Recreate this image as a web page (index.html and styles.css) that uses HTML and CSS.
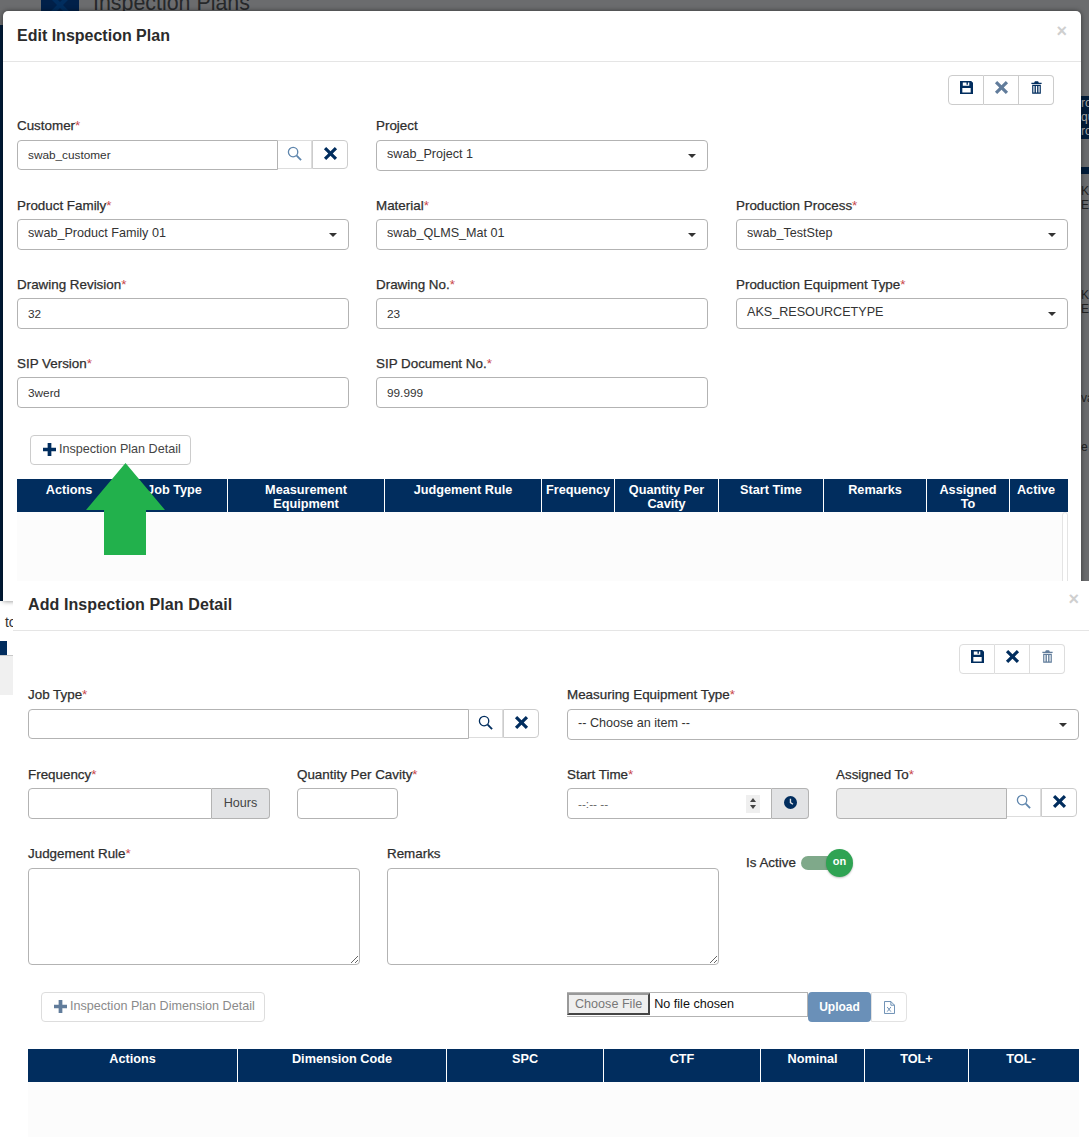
FILE: index.html
```html
<!DOCTYPE html>
<html>
<head>
    <title>Inspection Plans</title>
    <link rel="stylesheet" href="styles.css">
</head>
<body>
    <svg width="0" height="0" class="icon-defs">
        <symbol id="i-times" viewBox="0 0 16 16"><path d="M3.4 1 8 5.6 12.600 1 15 3.400 10.400 8 15 12.600 12.600 15 8 10.400 3.400 15 1 12.600 5.600 8 1 3.400z"/></symbol>
        <symbol id="i-save" viewBox="0 0 14 14"><path fill-rule="evenodd" d="M0 0h12l2 2v12H0zM3 1.500v3.500h7V1.500h-1.500v2.500h-1.500V1.500zM2.500 7.500v5h9v-5z"/></symbol>
        <symbol id="i-trash" viewBox="0 0 14 16"><path fill-rule="evenodd" d="M5 0h4l1 2h3.500v1.500H.5V2H4zM1.500 4.500h11V16h-11zM3 6v8.500h1.500V6zM6.200 6v8.500h1.600V6zM9.500 6v8.500H11V6z"/></symbol>
        <symbol id="i-search" viewBox="0 0 16 16"><circle cx="6.500" cy="6.500" r="5" fill="none" stroke="currentColor" stroke-width="1.400"/><path d="M10.300 10.300 15 15" stroke="currentColor" stroke-width="2" fill="none"/></symbol>
        <symbol id="i-plus" viewBox="0 0 14 14"><path d="M5 0h4v5h5v4H9v5H5V9H0V5h5z"/></symbol>
        <symbol id="i-clock" viewBox="0 0 14 14"><path fill-rule="evenodd" d="M7 0a7 7 0 1 1 0 14A7 7 0 0 1 7 0zM6.200 3v4.500l3 2 .9-1.200-2.400-1.600V3z"/></symbol>
        <symbol id="i-xls" viewBox="0 0 12 14"><path fill="none" stroke="currentColor" d="M.5.5h7l4 4v9H.5zM7.500.5v4h4"/><path fill="none" stroke="currentColor" d="M3.500 6.500l4 5M7.500 6.500l-4 5"/></symbol>
    </svg>

    <div class="backdrop">
        <div class="bg-logo"><svg class="icon bg-logo-x"><use href="#i-times"/></svg></div>
        <div class="bg-title">Inspection Plans</div>
        <div class="bg-side bg-side-head">ro<br>qu<br>ro</div>
        <div class="bg-side bg-side-bar"></div>
        <div class="bg-side bg-side-a">KS<br>ET</div>
        <div class="bg-side bg-side-b">KS<br>ET</div>
        <div class="bg-side bg-side-c">va</div>
        <div class="bg-side bg-side-d">e</div>
    </div>
    <div class="left-scrap">
        <div class="scrap-text">&nbsp;to</div>
        <div class="scrap-bar"></div>
    </div>

    <div class="modal modal-edit">
        <div class="modal-head">
            <h4>Edit Inspection Plan</h4>
            <span class="close">&times;</span>
        </div>
        <div class="modal-body">
            <div class="toolbar toolbar-edit">
                <button class="tool"><svg class="icon save"><use href="#i-save"/></svg></button>
                <button class="tool"><svg class="icon times faded"><use href="#i-times"/></svg></button>
                <button class="tool"><svg class="icon trash"><use href="#i-trash"/></svg></button>
            </div>
            <div class="edit-grid">
                <div class="field">
                    <label>Customer<em>*</em></label>
                    <div class="input-group">
                        <input type="text" value="swab_customer">
                        <button class="addon"><svg class="icon search"><use href="#i-search"/></svg></button>
                        <button class="addon last"><svg class="icon times"><use href="#i-times"/></svg></button>
                    </div>
                </div>
                <div class="field">
                    <label>Project</label>
                    <div class="select"><span>swab_Project 1</span><i class="caret"></i></div>
                </div>
                <div class="field"></div>

                <div class="field">
                    <label>Product Family<em>*</em></label>
                    <div class="select"><span>swab_Product Family 01</span><i class="caret"></i></div>
                </div>
                <div class="field">
                    <label>Material<em>*</em></label>
                    <div class="select"><span>swab_QLMS_Mat 01</span><i class="caret"></i></div>
                </div>
                <div class="field">
                    <label>Production Process<em>*</em></label>
                    <div class="select"><span>swab_TestStep</span><i class="caret"></i></div>
                </div>

                <div class="field">
                    <label>Drawing Revision<em>*</em></label>
                    <input type="text" value="32">
                </div>
                <div class="field">
                    <label>Drawing No.<em>*</em></label>
                    <input type="text" value="23">
                </div>
                <div class="field">
                    <label>Production Equipment Type<em>*</em></label>
                    <div class="select"><span>AKS_RESOURCETYPE</span><i class="caret"></i></div>
                </div>

                <div class="field">
                    <label>SIP Version<em>*</em></label>
                    <input type="text" value="3werd">
                </div>
                <div class="field">
                    <label>SIP Document No.<em>*</em></label>
                    <input type="text" value="99.999">
                </div>
            </div>
            <button class="add-btn add-detail"><svg class="icon plus"><use href="#i-plus"/></svg>Inspection Plan Detail</button>
            <div class="grid-head head-edit">
                <div>Actions</div>
                <div>Job Type</div>
                <div class="wrap">Measurement Equipment</div>
                <div>Judgement Rule</div>
                <div>Frequency</div>
                <div>Quantity Per Cavity</div>
                <div>Start Time</div>
                <div>Remarks</div>
                <div>Assigned To</div>
                <div>Active</div>
            </div>
            <div class="grid-body body-edit"><div class="scroll-track"></div></div>
        </div>
    </div>

    <svg class="arrow" width="79" height="92" viewBox="0 0 79 92">
        <path d="M39.500 0 79 47H60V92H18V47H0z" fill="#22b14c"/>
    </svg>

    <div class="modal modal-add">
        <div class="modal-head">
            <h4>Add Inspection Plan Detail</h4>
            <span class="close">&times;</span>
        </div>
        <div class="modal-body">
            <div class="toolbar toolbar-add">
                <button class="tool"><svg class="icon save"><use href="#i-save"/></svg></button>
                <button class="tool"><svg class="icon times"><use href="#i-times"/></svg></button>
                <button class="tool"><svg class="icon trash faded"><use href="#i-trash"/></svg></button>
            </div>

            <div class="row row-two">
                <div class="field">
                    <label>Job Type<em>*</em></label>
                    <div class="input-group job">
                        <input type="text">
                        <button class="addon"><svg class="icon search strong"><use href="#i-search"/></svg></button>
                        <button class="addon last"><svg class="icon times"><use href="#i-times"/></svg></button>
                    </div>
                </div>
                <div class="field">
                    <label>Measuring Equipment Type<em>*</em></label>
                    <div class="select"><span>-- Choose an item --</span><i class="caret"></i></div>
                </div>
            </div>

            <div class="row row-four">
                <div class="field">
                    <label>Frequency<em>*</em></label>
                    <div class="input-group freq">
                        <input type="text">
                        <span class="suffix">Hours</span>
                    </div>
                </div>
                <div class="field">
                    <label>Quantity Per Cavity<em>*</em></label>
                    <input type="text" class="qty">
                </div>
                <div class="field">
                    <label>Start Time<em>*</em></label>
                    <div class="input-group time">
                        <div class="time-box">
                            <span>--:-- --</span>
                            <span class="spinner"><i class="up"></i><i class="down"></i></span>
                        </div>
                        <span class="suffix"><svg class="icon clock"><use href="#i-clock"/></svg></span>
                    </div>
                </div>
                <div class="field">
                    <label>Assigned To<em>*</em></label>
                    <div class="input-group assigned">
                        <input type="text" disabled>
                        <button class="addon"><svg class="icon search"><use href="#i-search"/></svg></button>
                        <button class="addon last"><svg class="icon times"><use href="#i-times"/></svg></button>
                    </div>
                </div>
            </div>

            <div class="row row-three">
                <div class="field">
                    <label>Judgement Rule<em>*</em></label>
                    <textarea></textarea>
                </div>
                <div class="field">
                    <label>Remarks</label>
                    <textarea></textarea>
                </div>
                <div class="active-field">
                    <label>Is Active</label>
                    <div class="toggle"><span class="knob">on</span></div>
                </div>
            </div>

            <div class="row row-actions">
                <button class="add-btn add-dimension"><svg class="icon plus faded"><use href="#i-plus"/></svg>Inspection Plan Dimension Detail</button>
                <div class="upload">
                    <input type="file" class="file">
                    <button class="upload-btn">Upload</button>
                    <button class="xls-btn"><svg class="icon xls"><use href="#i-xls"/></svg></button>
                </div>
            </div>

            <div class="grid-head head-add">
                <div>Actions</div>
                <div>Dimension Code</div>
                <div>SPC</div>
                <div>CTF</div>
                <div>Nominal</div>
                <div>TOL+</div>
                <div>TOL-</div>
            </div>
            <div class="grid-body body-add"></div>
        </div>
    </div>
</body>
</html>
```

FILE: styles.css
```css
* {
    box-sizing: border-box;
}

html, body {
    margin: 0;
    height: 1137px;
    overflow: hidden;
}

body {
    position: relative;
    width: 1089px;
    background-color: #fff;
    font-family: "Liberation Sans", Arial, sans-serif;
    font-size: 12px;
    color: #333;
}

.icon-defs {
    position: absolute;
}

/* page behind the dialogs */
.backdrop {
    position: absolute;
    left: 0;
    top: 0;
    width: 1089px;
    height: 601px;
    background-color: #6b6c6e;
    overflow: hidden;
}

.backdrop::before {
    content: "";
    position: absolute;
    left: 0;
    top: 25px;
    width: 3px;
    height: 576px;
    background-color: #011b38;
}

.bg-logo {
    position: absolute;
    left: 41px;
    top: -14px;
    width: 38px;
    height: 38px;
    background-color: #012049;
    display: flex;
    align-items: center;
    justify-content: center;
}

.bg-logo-x {
    width: 20px;
    height: 20px;
    fill: #6b6c6e;
}

.bg-title {
    position: absolute;
    left: 93px;
    top: -9px;
    font-size: 21.4px;
    color: #26282a;
}

.bg-side {
    position: absolute;
    left: 1081px;
    width: 8px;
    overflow: hidden;
    font-size: 12px;
    line-height: 14px;
    color: #222;
}

.bg-side-head {
    top: 96px;
    height: 43px;
    background-color: #011b38;
    color: #aaa;
}

.bg-side-bar {
    top: 167px;
    height: 7px;
    background-color: #011b38;
}

.bg-side-a {
    top: 184px;
    height: 32px;
}

.bg-side-b {
    top: 288px;
    height: 32px;
}

.bg-side-c {
    top: 391px;
    height: 16px;
}

.bg-side-d {
    top: 440px;
    height: 16px;
}

.left-scrap {
    position: absolute;
    left: 0;
    top: 601px;
    width: 13px;
    height: 94px;
    background: linear-gradient(#fff 54px, #c8c8c8 54px, #c8c8c8 55px, #f0f0f0 55px);
    overflow: hidden;
}

.scrap-text {
    font-size: 14px;
    line-height: 16px;
    margin: 13px 0 0 1px;
    white-space: nowrap;
}

.scrap-bar {
    width: 7px;
    height: 14px;
    margin-top: 11px;
    background-color: #012d5e;
}

/* dialogs */
.modal {
    position: absolute;
    background-color: #fff;
    border-radius: 5px;
    overflow: hidden;
}

.modal-edit {
    left: 3px;
    top: 11px;
    width: 1078px;
    height: 590px;
    border-radius: 5px 5px 0 0;
    box-shadow: 0 0 5px rgba(0, 0, 0, 0.5);
}

.modal-add {
    left: 13px;
    top: 581px;
    width: 1076px;
    height: 556px;
    border-radius: 0;
}

.modal-head {
    display: flex;
    align-items: center;
    justify-content: space-between;
    border-bottom: 1px solid #e5e5e5;
}

.modal-edit .modal-head {
    height: 51px;
    padding: 0 14px;
}

.modal-add .modal-head {
    height: 50px;
    padding: 0 10px 2px 15px;
}

h4 {
    margin: 0;
    font-size: 16px;
    font-weight: bold;
    color: #2b2b2b;
}

.modal-add h4 {
    letter-spacing: 0.1px;
}

.close {
    font-size: 18px;
    font-weight: bold;
    color: #cfcfcf;
    margin-top: -10px;
}

.modal-edit .modal-body {
    padding: 13px 13px 0 14px;
}

.modal-add .modal-body {
    padding: 13px 10px 0 15px;
}

/* toolbars */
.toolbar {
    display: flex;
    justify-content: flex-end;
    height: 30px;
    margin-bottom: 10px;
    margin-right: 14px;
}

.tool {
    width: 35px;
    height: 30px;
    padding: 0 0 5px;
    background-color: #fff;
    border: 1px solid #ccc;
    border-left-width: 0;
    display: flex;
    align-items: center;
    justify-content: center;
}

.tool:first-child {
    width: 36px;
    border-left-width: 1px;
    border-radius: 4px 0 0 4px;
}

.tool:last-child {
    border-radius: 0 4px 4px 0;
}

.toolbar-add .tool {
    border-color: #ddd;
}

.icon {
    display: block;
    fill: #012d5e;
    color: #012d5e;
}

.save {
    width: 13px;
    height: 13px;
}

.times {
    width: 15px;
    height: 15px;
}

.trash {
    width: 11px;
    height: 13px;
}

.faded {
    opacity: 0.62;
}

.search {
    width: 15px;
    height: 15px;
    color: #5f86ad;
}

.search.strong {
    color: #012d5e;
}

.plus {
    width: 13px;
    height: 13px;
    margin-right: 3px;
}

.clock {
    width: 13px;
    height: 13px;
}

.xls {
    width: 11px;
    height: 13px;
    color: #5f86ad;
}

/* form fields */
.edit-grid {
    display: grid;
    grid-template-columns: 359px 360px 332px;
    row-gap: 23px;
}

.edit-grid .field {
    width: 332px;
}

.edit-grid .input-group {
    width: 331px;
}

.edit-grid .field:nth-child(n+4) label {
    margin-top: 1px;
    margin-bottom: 4px;
}

label {
    display: block;
    height: 20px;
    margin-bottom: 5px;
    font-size: 13.4px;
    line-height: 22px;
    color: #2e2e2e;
    -webkit-text-stroke: 0.25px #2e2e2e;
    white-space: nowrap;
}

label em {
    font-style: normal;
    color: #c8474a;
    -webkit-text-stroke: 0;
}

input[type="text"], .select, textarea, .time-box {
    display: block;
    width: 100%;
    height: 31px;
    padding: 0 10px;
    font-family: "Liberation Sans", Arial, sans-serif;
    font-size: 11.8px;
    color: #333;
    background-color: #fff;
    border: 1px solid #b3b3b3;
    border-radius: 4px;
    outline: none;
}

.select {
    display: flex;
    align-items: center;
    justify-content: space-between;
    padding-bottom: 3px;
    font-size: 12.6px;
}

.caret {
    width: 0;
    height: 0;
    margin: 4px 1px 0 0;
    border-left: 4px solid transparent;
    border-right: 4px solid transparent;
    border-top: 4px solid #333;
}

.input-group {
    display: flex;
}

.input-group input[type="text"] {
    flex: 1;
    min-width: 0;
    height: 30px;
    border-radius: 4px 0 0 4px;
}

.addon {
    width: 34px;
    height: 29px;
    padding: 0;
    background-color: #fff;
    border: 1px solid #ddd;
    border-left-width: 0;
    display: flex;
    align-items: center;
    justify-content: center;
}

.addon.last {
    width: 36px;
    border-color: #ccc;
    border-left-width: 1px;
    border-radius: 0 4px 4px 0;
}

.addon svg {
    margin-bottom: 3px;
}

.suffix {
    display: flex;
    align-items: center;
    justify-content: center;
    height: 31px;
    padding-bottom: 2px;
    font-size: 12.6px;
    color: #444;
    background-color: #e2e3e5;
    border: 1px solid #b3b3b3;
    border-left-width: 0;
    border-radius: 0 4px 4px 0;
}

.job {
    width: 511px;
}

.freq {
    width: 242px;
}

.freq input[type="text"] {
    height: 31px;
}

.freq .suffix {
    width: 58px;
}

.qty {
    width: 101px !important;
}

.time {
    width: 242px;
}

.time-box {
    flex: 1;
    display: flex;
    align-items: center;
    justify-content: space-between;
    padding-right: 11px;
    color: #666;
    border-radius: 4px 0 0 4px;
}

.time .suffix {
    width: 37px;
}

.spinner {
    width: 14px;
    height: 18px;
    background-color: #efefef;
    display: flex;
    flex-direction: column;
    align-items: center;
    justify-content: center;
    gap: 3px;
}

.spinner i {
    width: 0;
    height: 0;
    border-left: 3px solid transparent;
    border-right: 3px solid transparent;
}

.spinner .up {
    border-bottom: 4px solid #444;
}

.spinner .down {
    border-top: 4px solid #444;
}

.assigned {
    width: 241px;
}

.assigned input[type="text"] {
    height: 31px;
    background-color: #ececec;
}

textarea {
    height: 97px;
    padding: 6px 11px;
}

.row {
    display: grid;
}

.row-two {
    grid-template-columns: 539px 512px;
    margin-bottom: 23px;
}

.row-four {
    grid-template-columns: 269px 270px 269px 241px;
    margin-bottom: 24px;
}

.row-four label {
    margin-top: 1px;
    margin-bottom: 4px;
}

.row-three {
    grid-template-columns: 359px 359px 300px;
    margin-bottom: 27px;
}

.row-three textarea {
    width: 332px;
}

.active-field {
    display: flex;
    align-items: flex-start;
    padding-top: 9px;
}

.active-field label {
    margin: 0;
    height: 20px;
    width: 55px;
}

.toggle {
    position: relative;
    width: 38px;
    height: 14px;
    margin: 4px 0 0 0;
    background-color: #7fa98a;
    border-radius: 7px;
}

.knob {
    position: absolute;
    right: -14px;
    top: -7px;
    width: 27px;
    height: 28px;
    border-radius: 50%;
    background-color: #2fa353;
    box-shadow: 0 1px 2px rgba(0, 0, 0, 0.25);
    color: #fff;
    font-size: 11px;
    font-weight: bold;
    line-height: 24px;
    text-align: center;
}

/* buttons under the form */
.add-btn {
    display: flex;
    align-items: center;
    height: 30px;
    margin: 0;
    padding: 0 8px 2px 12px;
    font-family: "Liberation Sans", Arial, sans-serif;
    font-size: 12.6px;
    color: #444;
    background-color: #fff;
    border: 1px solid #ccc;
    border-radius: 4px;
    white-space: nowrap;
}

.add-detail {
    width: 161px;
    margin: 27px 0 14px 13px;
}

.row-actions {
    grid-template-columns: 539px 512px;
    margin-bottom: 27px;
    height: 30px;
}

.add-dimension {
    width: 224px;
    margin-left: 13px;
    color: #8a8a8a;
    border-color: #ddd;
}

.upload {
    display: flex;
    align-items: flex-start;
}

.file {
    width: 241px;
    height: 25px;
    padding: 0 0 4px;
    font-family: "Liberation Sans", Arial, sans-serif;
    font-size: 12.6px;
    color: #111;
    border: 1px solid #b3b3b3;
    border-left-width: 0;
}

.file::file-selector-button {
    height: 22px;
    margin-right: 4px;
    font-family: "Liberation Sans", Arial, sans-serif;
    font-size: 12.6px;
    color: #777;
    background-color: #efefef;
    border: 2px outset #999;
    padding: 0 6px;
}

.upload-btn {
    width: 63px;
    height: 30px;
    padding: 0;
    font-family: "Liberation Sans", Arial, sans-serif;
    font-size: 12px;
    font-weight: bold;
    color: #fff;
    background-color: #6a90b8;
    border: none;
    border-radius: 4px;
}

.xls-btn {
    width: 36px;
    height: 30px;
    padding: 0;
    background-color: #fff;
    border: 1px solid #e2e2e2;
    border-radius: 0 4px 4px 0;
    display: flex;
    align-items: center;
    justify-content: center;
}

/* grid header */
.grid-head {
    display: grid;
    height: 33px;
    background-color: #012d5e;
    color: #fff;
    font-size: 12.7px;
    font-weight: bold;
    line-height: 14px;
    text-align: center;
}

.grid-head div {
    padding: 4px 4px 0;
    border-left: 1px solid #fff;
}

.grid-head div:first-child {
    border-left: none;
}

.grid-head .wrap {
    padding: 4px 18px 0;
}

.head-edit {
    width: 1051px;
    grid-template-columns: 104px 106px 157px 157px 73px 104px 105px 103px 83px 59px;
}

.head-edit div:last-child {
    padding-right: 10px;
}

.head-add {
    width: 1051px;
    grid-template-columns: 209px 209px 157px 157px 104px 104px 111px;
}

.head-add div {
    padding-top: 3px;
}

.head-add div:last-child {
    padding-right: 10px;
}

.grid-body {
    background-color: #fcfcfc;
    display: flex;
    justify-content: flex-end;
}

.body-edit {
    width: 1051px;
    height: 90px;
}

.body-add {
    width: 1051px;
    height: 60px;
}

.scroll-track {
    width: 6px;
    background-color: #fff;
    border: 1px solid #e4e4e4;
    border-radius: 3px;
}

.arrow {
    position: absolute;
    left: 86px;
    top: 463px;
}
```
